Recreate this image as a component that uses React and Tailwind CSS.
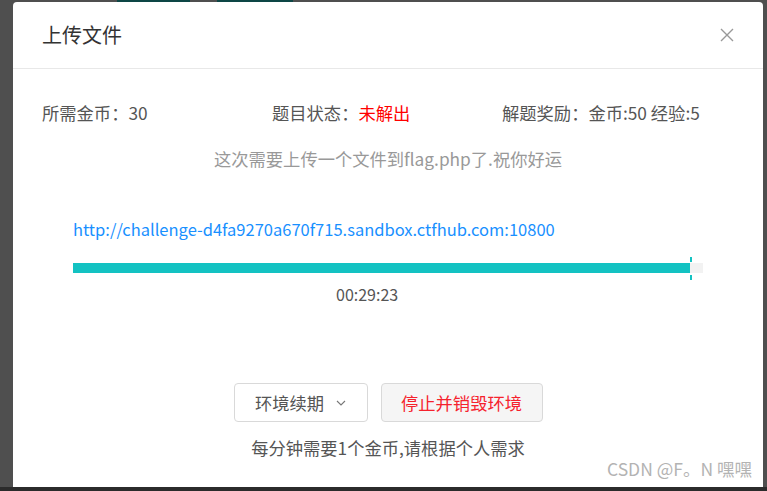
import React from "react";

const FONT = { fontFamily: '"Microsoft YaHei", "Noto Sans CJK SC", "Noto Sans", sans-serif' };

const ChallengeModal = () => {
  const progress = 97.9;

  return (
    <div className="w-[767px] h-[491px] bg-[#4f4f4f] flex flex-col overflow-hidden" style={FONT}>
      {/* top strip of the page behind */}
      <div className="h-[2px] flex shrink-0">
        <div className="w-[117px]" />
        <div className="w-[73px] bg-[#0d4645]" />
        <div className="w-[27px]" />
        <div className="w-[76px] bg-[#0d4645]" />
      </div>

      <div className="flex flex-1 min-h-0">
        <div className="w-[13px] shrink-0" />
        <div className="w-[750px] bg-white rounded-t-[4px] flex flex-col">
          {/* header */}
          <div className="h-[67px] border-b border-[#e8e8e8] flex items-center justify-between pl-[29px] pr-[28px] shrink-0">
            <span className="text-[20px] text-[#333]">上传文件</span>
            <svg width="16" height="16" viewBox="0 0 16 16" className="text-[#999]">
              <path d="M2 2 L14 14 M14 2 L2 14" stroke="currentColor" strokeWidth="1.4" fill="none" />
            </svg>
          </div>

          {/* info row */}
          <div className="pl-[29px] mt-[32px] grid grid-cols-[230px_230px_230px] text-[17.3px] leading-[24px] text-[#555]">
            <div>所需金币：30</div>
            <div>
              题目状态：<span className="text-[#ff0000]">未解出</span>
            </div>
            <div>解题奖励：金币:50 经验:5</div>
          </div>

          <div className="mt-[22px] text-center text-[17.3px] leading-[24px] text-[#999]">
            这次需要上传一个文件到flag.php了.祝你好运
          </div>

          {/* environment */}
          <div className="px-[60px] mt-[46px]">
            <div className="text-[16.5px] leading-[24px] text-[#1890ff]">
              http://challenge-d4fa9270a670f715.sandbox.ctfhub.com:10800
            </div>
            <div className="relative mt-[22px] h-[10px] bg-[#f2f2f2]">
              <div className="h-full bg-[#13c2c2]" style={{ width: `${progress}%` }} />
              <div className="absolute top-[-6px] w-[2px] h-[5px] bg-[#13c2c2]" style={{ left: `${progress}%` }} />
              <div className="absolute top-[12px] w-[2px] h-[5px] bg-[#13c2c2]" style={{ left: `${progress}%` }} />
            </div>
            <div className="pl-[263px] mt-[10px] text-[16px] leading-[22px] text-[#555]">00:29:23</div>
          </div>

          {/* actions */}
          <div className="mt-[78px] flex justify-center gap-[13px]">
            <button className="w-[134px] h-[39px] border border-[#d9d9d9] rounded-[4px] bg-white flex items-center justify-center gap-[12px] text-[17.3px] text-[#555]">
              <span>环境续期</span>
              <svg width="10" height="6" viewBox="0 0 10 6">
                <path d="M1 1 L5 5 L9 1" stroke="#777" strokeWidth="1.1" fill="none" />
              </svg>
            </button>
            <button className="w-[162px] h-[39px] border border-[#d9d9d9] rounded-[4px] bg-[#f5f5f5] text-[17.3px] text-[#f5222d]">
              停止并销毁环境
            </button>
          </div>

          <div className="mt-[14px] text-center text-[17.3px] leading-[24px] text-[#555]">
            每分钟需要1个金币,请根据个人需求
          </div>

          <div className="mt-[-2px] pr-[11px] text-right text-[17.5px] leading-[22px] text-[#b3b3b3]">
            CSDN @F。N 嘿嘿
          </div>
        </div>
        <div className="w-[4px] shrink-0" />
      </div>

      {/* bottom strip */}
      <div className="h-[4px] bg-[#2b2b2b] shrink-0" />
    </div>
  );
};

export default function App() {
  return <ChallengeModal />;
}
